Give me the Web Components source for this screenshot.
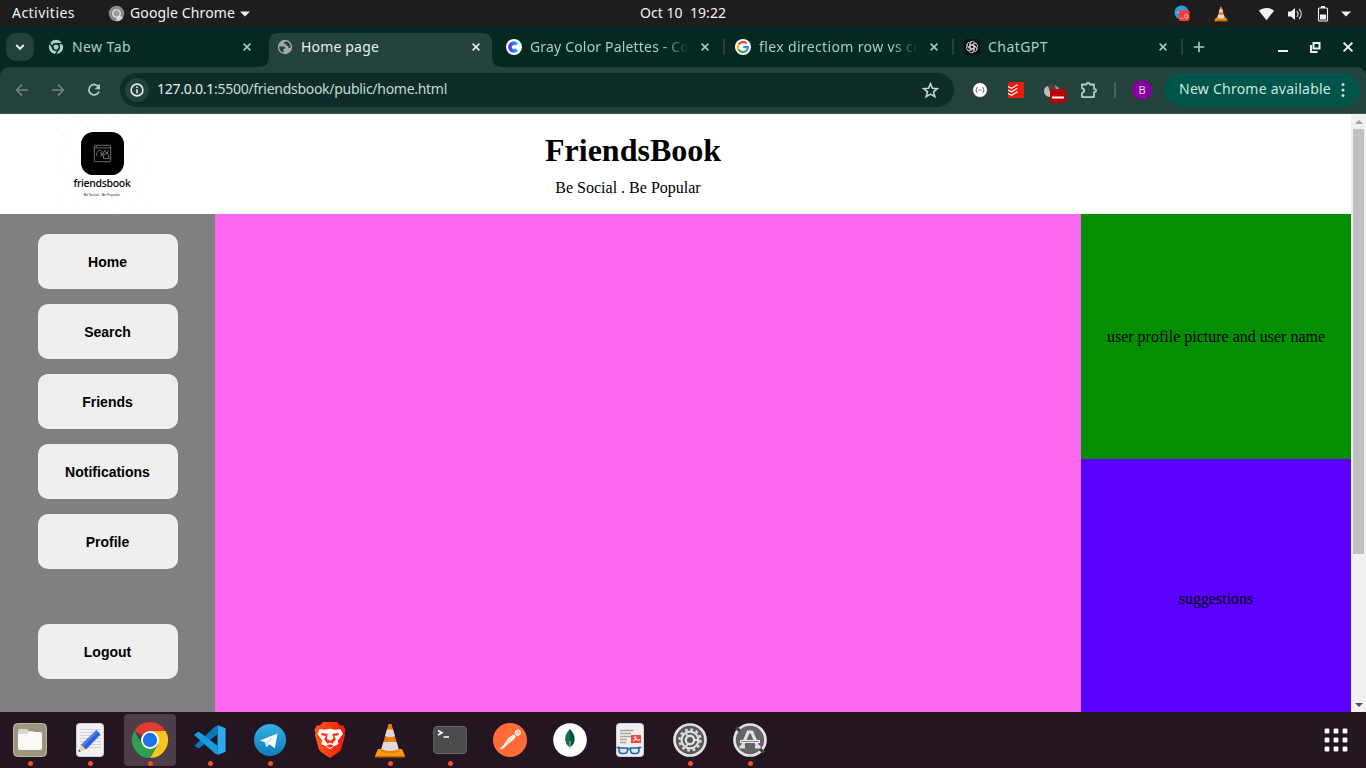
<!DOCTYPE html>
<html lang="en">
<head>
<meta charset="utf-8">
<title>Home page</title>
<style>
html,body{margin:0;padding:0;height:100%;overflow:hidden}
body{font-family:"Noto Sans","Open Sans",sans-serif}
</style>
</head>
<body>
<desk-top></desk-top>
<script>
const define=(name,html,setup)=>{
  const t=document.createElement('template');
  t.innerHTML=html;
  customElements.define(name,class extends HTMLElement{
    constructor(){super();this.attachShadow({mode:'open'}).append(t.content.cloneNode(true));}
    connectedCallback(){if(setup)setup(this,this.shadowRoot);}
  });
};

const stroke=(w,c='currentColor')=>`fill="none" stroke="${c}" stroke-width="${w}"`;
const cone=`<path d="M4 26h24l3 7H1z" fill="#f59a12"/><path d="M1 33h30v1.500H1z" fill="#c96500"/><path d="M14.500 1h3L25 28c-3 3-15 3-18 0z" fill="#f27a08"/><path d="M13 6.500h6l2 6.500c-3 1.500-7 1.500-10 0zM9.300 19h13.400l2 7c-4 2.500-13.400 2.500-17.400 0z" fill="#dcdcdc"/>`;
const glyphs={
  chromeSmall:['0 0 18 18',`<circle cx="9" cy="9" r="8.200" fill="#8b8b8b"/><path d="M9 9l7 4.300A8 8 0 0 1 9 17.200z" fill="#d4d4d4"/><circle cx="9" cy="9" r="4" fill="#9a9a9a" stroke="#eee" stroke-width="1.200"/>`],
  caret:['0 0 10 6',`<path d="M0 .5h10L5 5.500z" fill="#f2f2f2"/>`],
  chat:['0 0 18 18',`<circle cx="8" cy="8" r="7.500" fill="#279fda"/><path d="M3 8l4-1.500V9z" fill="#fff"/><rect x="5" y="5.500" width="11.500" height="11.500" rx="2.500" fill="#f63c38"/><path d="M6.500 14h1.300M8.600 14h1.300" stroke="#fcc"/><rect x="11.300" y="10" width="3.300" height="4" rx="1.400" ${stroke(.9,'#fcc')}/>`],
  cone:['0 0 32 35',cone],
  wifi:['0 0 18 14',`<path d="M1 3.500C5.500-.3 12.500-.3 17 3.500L9 13.500z" fill="#f2f2f2"/>`],
  sound:['0 0 16 14',`<path d="M1 4.500h3L8 1v12L4 9.500H1z" fill="#f2f2f2"/><path d="M9.800 4.200c1.500 1.600 1.500 4 0 5.600M12 2c3 2.800 3 7.200 0 10" ${stroke(1.1,'#ddd')}/>`],
  battery:['0 0 12 16',`<path d="M4 0h4v2H4zM3 8.500h6v5H3z" fill="#f2f2f2"/><rect x="1.500" y="2" width="9" height="13" rx="1" ${stroke(1.1,'#f2f2f2')}/>`],
  down:['0 0 12 12',`<path d="M2.800 4.300L6 7.500 9.200 4.300" ${stroke(1.7)}/>`],
  chrome1:['0 0 16 16',`<circle cx="8" cy="8" r="7.200" fill="#a8cfc4"/><circle cx="8" cy="8" r="3.300" fill="#a8cfc4" stroke="#062822" stroke-width="1.500"/><path d="M8 4.600h7M5.100 9.700L1.600 3.900M11 9.700l-3.600 6" ${stroke(1.4,'#062822')}/>`],
  globe:['0 0 16 16',`<circle cx="8" cy="8" r="7.200" fill="#a3a8ac"/><path d="M2.300 7.500h4c1.600 0 2.400 1 2 2.300H6.500v3.600C3.900 13 2 10.600 2.300 7.500zM9.300 2.400c-1.500.3-2.600 1-2.400 2.500h2.500v2h2v2h2.200c.6-3-1.500-6-4.300-6.500z" fill="#24423c"/>`],
  canva:['0 0 16 16',`<defs><linearGradient id="g"><stop stop-color="#7227f2"/><stop offset="1" stop-color="#00c4e8"/></linearGradient></defs><circle cx="8" cy="8" r="8" fill="#fff"/><path d="M10.800 5.400A3.900 3.900 0 1 0 10.800 10.600" ${stroke(3.7,'url(#g)')}/>`],
  google:['0 0 16 16',`<circle cx="8" cy="8" r="8" fill="#fff"/><g fill="none" stroke-width="2.200"><path d="M11.700 4.600A5 5 0 0 0 3.600 5.600" stroke="#ea4335"/><path d="M3.600 5.600a5 5 0 0 0 0 4.800" stroke="#fbbc05"/><path d="M3.600 10.400a5 5 0 0 0 7.800 1.300" stroke="#34a853"/><path d="M11.400 11.700A4.500 4.500 0 0 0 13 8.100H8.200" stroke="#4285f4"/></g>`],
  gpt:['0 0 16 16',`<rect width="16" height="16" rx="3" fill="#111"/><g ${stroke(.8,'#ddd')}>${[0,60,120,180,240,300].map(a=>`<path transform="rotate(${a} 8 8)" d="M6.400 8.900V4.700a2.400 2.400 0 0 1 4.400-1.300M6.400 6.200L9.800 4.300a2.300 2.300 0 0 1 3 .9"/>`).join('')}</g>`],
  x:['0 0 10 10',`<path d="M1.600 1.600l6.800 6.800M8.400 1.600L1.600 8.400" ${stroke(1.5)}/>`],
  bigx:['0 0 12 12',`<path d="M1.600 1.600l8.800 8.800M10.400 1.600L1.600 10.400" ${stroke(2)}/>`],
  plus:['0 0 12 12',`<path d="M6 .8v10.400M.8 6h10.400" ${stroke(1.6)}/>`],
  min:['0 0 12 12',`<path d="M1 10h10" ${stroke(2)}/>`],
  restore:['0 0 12 12',`<path d="M4.500 2h6v5.500h-6z" ${stroke(2)}/><path d="M2 4v7h6.500" ${stroke(2)}/>`],
  back:['0 0 14 14',`<path d="M13 7H2M7 1.500L1.500 7 7 12.500" ${stroke(1.6)}/>`],
  fwd:['0 0 14 14',`<path d="M1 7h11M7 1.500L12.500 7 7 12.500" ${stroke(1.6)}/>`],
  reload:['0 0 14 14',`<path d="M11.700 4.300A5.200 5.200 0 1 0 12 8.500" ${stroke(1.8)}/><path d="M13 .8v5.400H7.600z" fill="currentColor"/>`],
  info:['0 0 14 14',`<circle cx="7" cy="7" r="5.900" ${stroke(1.6)}/><path d="M7 6.200v4M7 3.500v1.600" ${stroke(1.6)}/>`],
  star:['0 0 16 16',`<path d="M8 1.700l1.800 4.200 4.600.4-3.500 3 1.100 4.500L8 11.400l-4 2.400 1.100-4.500-3.500-3 4.600-.4z" ${stroke(1.500)}/>`],
  braces:['0 0 16 16',`<circle cx="8" cy="8" r="7.400" fill="#fff" stroke="#222" stroke-width=".7"/><path d="M5.500 5.200C4 5.200 5.200 7.600 3.800 8c1.400.4.200 2.800 1.700 2.800M10.500 5.200c1.500 0 .3 2.400 1.700 2.800-1.400.4-.2 2.800-1.700 2.800" ${stroke(.9,'#333')}/><path d="M6.500 8h3" ${stroke(1,'#333')} stroke-dasharray="1 1"/>`],
  todo:['0 0 16 16',`<rect width="16" height="16" rx="1.500" fill="#ea1c0d"/><path d="M0 4.500l3.500 1.700L9.500 2.800M0 8l3.500 1.700 6-3.400M0 11.500l3.500 1.700 6-3.400" ${stroke(1.2,'#fff')}/>`],
  mask:['0 0 24 22',`<path d="M1 9c0-4 4-6 6-4s2 9 1 10C4 15 1 13 1 9z" fill="#bdbdbd"/><path d="M5 4l3-2 5 1 4 4v3H7z" fill="#444"/><path d="M12 3l4 3v3l-3-1z" fill="#999"/><rect x="7" y="7" width="16" height="14" rx="2.500" fill="#b80000"/><path d="M9 15.500h12" ${stroke(2,'#fff')}/>`],
  puzzle:['0 0 18 18',`<path d="M2 3.500h4.500c0-2.500 3.200-2.500 3.200 0H14v4.400c2.800 0 2.800 3.200 0 3.200v5H2v-4.300c3-.3 3-4.300 0-4.500z" ${stroke(1.8)} stroke-linejoin="round"/>`],
  dots:['0 0 4 16',`<circle cx="2" cy="2.500" r="1.500" fill="currentColor"/><circle cx="2" cy="8" r="1.500" fill="currentColor"/><circle cx="2" cy="13.500" r="1.500" fill="currentColor"/>`],
  up:['0 0 8 4',`<path d="M0 4h8L4 0z" fill="#a3a3a3"/>`],
  dn:['0 0 8 4',`<path d="M0 0h8L4 4z" fill="#505050"/>`],
  files:['0 0 36 36',`<rect x="1.500" y="1.500" width="33" height="33" rx="4" fill="#9c957f" stroke="#b9b3a1"/><path d="M6 9a2 2 0 0 1 2-2h7l2 2h5v8H6z" fill="#dcd8c9"/><path d="M6 12h9l2-2h11a2 2 0 0 1 2 2v14a2 2 0 0 1-2 2H8a2 2 0 0 1-2-2z" fill="#faf9f7"/>`],
  edit:['0 0 36 36',`<rect x="4.500" y="1.500" width="27" height="33" rx="3" fill="#f1f1f2" stroke="#d0d0d0"/><path d="M8 7.500h21M8 10.500h21M8 13.500h21M8 16.500h21M8 19.500h21M8 22.500h21M8 25.500h21" ${stroke(.9,'#cdcdcf')}/><path d="M24.500 8l4 4.500-14.500 15-5-4.500z" fill="#2f5fd6"/><path d="M24.500 8l-15.500 15 2 2L26 9.800z" fill="#4d82ec"/><path d="M9 23l5 4.500-7.500 2z" fill="#f1d0ab"/><path d="M6.300 29.800l.8-2.200 1.700 1.600z" fill="#333"/>`],
  chrome:['0 0 36 36',`<path d="M18 18L2.400 9A18 18 0 0 1 33.600 9z" fill="#df3b2f"/><path d="M18 18V9h15.600A18 18 0 0 1 18 36l7.800-13.500z" fill="#fcc31e"/><path d="M18 18l7.800 4.500L18 36A18 18 0 0 1 2.400 9l7.800 13.500z" fill="#30a050"/><circle cx="18" cy="18" r="9" fill="#fff"/><circle cx="18" cy="18" r="7.200" fill="#1c73e8"/>`],
  code:['0 0 36 36',`<path d="M1.500 24L23 4l3-1.500V12L6 27z" fill="#0877b9"/><path d="M1.500 12L6 9l20 15v9.500L23 32 1.500 13z" fill="#169cdf"/><path d="M26 2l8.500 3.500v25L26 34z" fill="#2caaf1"/>`],
  tele:['0 0 36 36',`<defs><linearGradient id="g" x2="0" y2="1"><stop stop-color="#37aee2"/><stop offset="1" stop-color="#0b7fbd"/></linearGradient></defs><circle cx="18" cy="18" r="16" fill="url(#g)"/><path d="M8 18.500L25.500 11.500l-2.700 14.700-5.500-4-3 3-1.300-5z" fill="#fff"/><path d="M13.500 20l9-5.500-6.200 7-2 3.500z" fill="#cfe5f2"/>`],
  brave:['0 0 36 36',`<defs><linearGradient id="g"><stop stop-color="#ff5a1c"/><stop offset=".5" stop-color="#fb3a16"/><stop offset="1" stop-color="#f5140c"/></linearGradient></defs><path d="M11 0h14l3.200 3.600 2.800-.3 2.500 4.500-1 3 .6 2-3.800 14.200L27 30l-9 6-9-6-2.300-3L2.900 12.800l.6-2-1-3L5 3.300l2.800.3z" fill="url(#g)"/><path d="M7.500 7.300l5.500.5 5-1 5 1 5.500-.5 2.500 4.700-5.300 6.500.8 3.500-5 2.500-3.500 2.700-3.500-2.700-5-2.500.8-3.500L5.500 12z" fill="#fff"/><path d="M9 11l6.800.7-1 4.800 3.200 2.500 3.200-2.500-1-4.800 6.800-.7-.4 2.300-4.300.7 1.500 3.500-3.300 4.200-2.500-1-2.500 1-3.300-4.200 1.500-3.500-4.300-.7zM14.200 23.600l3.800-1.400 3.800 1.400-3.800 2.300z" fill="#fa3516"/>`],
  vlc:['-2 0 36 35',cone],
  term:['0 0 36 36',`<rect x="1.700" y="4.500" width="32.600" height="27" rx="3" fill="#4b4b4b" stroke="#686868"/><path d="M6 8.500l4 2.200L6 13M11.500 15h5.500" ${stroke(1.6,'#fff')}/>`],
  postman:['0 0 36 36',`<circle cx="18" cy="18" r="17" fill="#ff6c37"/><circle cx="25.800" cy="10.700" r="2.700" fill="#ffc4ad" stroke="#fff"/><path d="M7.500 27.800l6-7.300 2-3.500 6-4.800 2.500 2.300-3.300 4-4.700 3.500-4.500 4.300z" fill="#fff"/><path d="M15 19.500l6.500-5.500M15.500 21.500l5.500-4.500" ${stroke(.7,'#ff9d7b')}/>`],
  mongo:['0 0 36 36',`<circle cx="18" cy="18" r="16.800" fill="#fff"/><path d="M18 7c5.500 5.500 7 14-.2 18.500z" fill="#00543a"/><path d="M18 7c-5.800 5.500-7 14 0 18.500z" fill="#0c7046"/><path d="M18 19v8.500" ${stroke(1,'#b8c4c2')}/>`],
  reader:['0 0 36 36',`<rect x="4.500" y="1.500" width="27" height="33" rx="3" fill="#efefef" stroke="#d2d2d2"/><path d="M8 8.500h13.500M8 11.500h11M8 14.500h13M8 17.500h7M8 20.500h6" ${stroke(1.3,'#aaa696')}/><rect x="19" y="13" width="10" height="8" fill="#ee4b47"/><path d="M21 19.200c3-1 4-4.500 2-4.500s0 4 5 3.300" ${stroke(1,'#fff')}/><path d="M7 26h8.500v2.500a3 3 0 0 1-3 3H10a3 3 0 0 1-3-3zM18.500 26H27v2.500a3 3 0 0 1-3 3h-2.500a3 3 0 0 1-3-3z" fill="#dce5ef" stroke="#2264a7" stroke-width="1.500"/><path d="M15.500 27h3M4.500 25.500H8M26 25.500h3.500" ${stroke(1.6,'#2264a7')}/>`],
  gear:['0 0 36 36',`<circle cx="18" cy="18" r="15.500" fill="#595959" stroke="#e2e2e2" stroke-width="2.700"/><circle cx="18" cy="18" r="10.500" ${stroke(2.400,'#dedede')} stroke-dasharray="2.750 2.750"/><circle cx="18" cy="18" r="8.400" ${stroke(2.200,'#dedede')}/><circle cx="18" cy="18" r="4.200" ${stroke(2.400,'#dedede')}/><path d="M22 18h4M16 14.600l-2.200-3.600M16 21.400l-2.200 3.600" ${stroke(1.800,'#dedede')}/>`],
  updater:['0 0 36 36',`<circle cx="18" cy="18" r="15.500" fill="#656565" stroke="#e2e2e2" stroke-width="2.700"/><path d="M4 5.500l4 3.500M28 27l4 3.500" ${stroke(3,'#454545')}/><path d="M10 25l6.200-15h3.600L26 25M7.500 25h5.500M23 25h5.500" ${stroke(3.200,'#e2e2e2')}/><path d="M8 19.500h20" ${stroke(3,'#eee')}/><path d="M9 19.500h18" ${stroke(1,'#ad68b8')}/>`],
  grid:['0 0 24 24',[0,9,18].map(y=>[0,9,18].map(x=>`<rect x="${x+.6}" y="${y+.6}" width="4.800" height="4.800" rx="1.200" fill="#fff"/>`).join('')).join('')],
};

define('app-icon',`<style>:host{display:block;flex:none}svg{display:block;width:100%;height:100%;overflow:visible}</style>`,(el,r)=>{
  const [vb,body]=glyphs[el.getAttribute('name')];
  const [w,h]=(el.getAttribute('size')||'16').split(' ');
  el.style.width=w+'px';el.style.height=(h||w)+'px';
  const holder=document.createElement('template');
  holder.innerHTML=`<svg viewBox="${vb}">${body}</svg>`;
  r.append(holder.content);
});

// Spreads its label over the given width by adjusting the letter spacing.
define('fit-text',`<style>:host{display:block;flex:none;white-space:pre}span{display:inline-block}</style><span><slot></slot></span>`,(el,r)=>{
  const span=r.querySelector('span'),w=+el.getAttribute('w');
  el.style.width=w+'px';
  const n=el.textContent.length;
  span.style.letterSpacing=((w-span.getBoundingClientRect().width)/n)+'px';
});

define('system-bar',`<style>
:host{display:grid;grid-template-columns:1fr 86px 1fr;align-items:center;height:27px;background:#1d1d1d;color:#f2f2f2;font-size:14px;line-height:27px}
div{display:flex;align-items:center}
fit-text{height:27px;line-height:25px}
.l{padding-left:12px}.l app-icon:first-of-type{margin:0 5px 0 33px}.l app-icon:last-of-type{margin-left:5px}
.r{justify-content:flex-end;padding-right:15px}
</style>
<div class="l"><fit-text w="63">Activities</fit-text><app-icon name="chromeSmall" size="17"></app-icon><fit-text w="105">Google Chrome</fit-text><app-icon name="caret" size="10 6"></app-icon></div>
<fit-text w="86">Oct 10  19:22</fit-text>
<div class="r"><app-icon name="chat" size="17"></app-icon><app-icon name="cone" size="14 16" style="margin-left:23px"></app-icon><app-icon name="wifi" size="17 14" style="margin-left:30px"></app-icon><app-icon name="sound" size="16 14" style="margin-left:12px"></app-icon><app-icon name="battery" size="12 16" style="margin-left:14px"></app-icon><app-icon name="caret" size="10 6" style="margin-left:12px"></app-icon></div>`);

define('browser-tab',`<style>
:host{display:flex;align-items:center;width:229px;height:40px;box-sizing:border-box;padding:0 0 0 8px;color:#a8cfc4;font-size:14px;line-height:38px;position:relative;flex:none}
:host>*,::slotted(*){position:relative}
.t{width:159px;margin:0 11px 0 8px;overflow:hidden;flex:none}
:host([fade]) .t{-webkit-mask-image:linear-gradient(90deg,#000 132px,transparent 159px)}
:host([active]){color:#e3f1ed}
.bg{display:none}
:host([active])>.bg{display:block;position:absolute;left:-10px;top:6px;width:243px;height:34px;fill:#24423c}
:host([sep]):after{content:"";position:absolute;right:2px;top:12px;width:2px;height:16px;background:#24423c}
</style><svg class="bg" viewBox="0 0 243 34"><path d="M0 34c7 0 10-4 10-10V10C10 3 14 0 20 0h203c7 0 10 4 10 10v14c0 6 3 10 10 10z"/></svg><slot name="icon"></slot><div class="t"><slot></slot></div><app-icon name="x" size="10"></app-icon>`);

define('tab-strip',`<style>
:host{display:flex;height:40px;background:#062822;align-items:center;padding-left:6px}
.menu{width:28px;height:28px;border-radius:10px;background:#24423c;color:#e3f1ed;display:flex;align-items:center;justify-content:center;margin-right:6px}
.ctl{display:flex;align-items:center;color:#eef3f2}
</style>
<div class="menu"><app-icon name="down" size="14"></app-icon></div>
<browser-tab><app-icon slot="icon" name="chrome1"></app-icon><fit-text w="59">New Tab</fit-text></browser-tab>
<browser-tab active><app-icon slot="icon" name="globe"></app-icon><fit-text w="78">Home page</fit-text></browser-tab>
<browser-tab sep fade><app-icon slot="icon" name="canva"></app-icon><fit-text w="159">Gray Color Palettes - Co</fit-text></browser-tab>
<browser-tab sep fade><app-icon slot="icon" name="google"></app-icon><fit-text w="163">flex directiom row vs co</fit-text></browser-tab>
<browser-tab sep><app-icon slot="icon" name="gpt"></app-icon><fit-text w="60">ChatGPT</fit-text></browser-tab>
<div class="ctl"><app-icon name="plus" size="12" style="margin-left:8px;color:#a8cfc4"></app-icon><app-icon name="min" size="12" style="margin-left:72px"></app-icon><app-icon name="restore" size="12" style="margin-left:20px"></app-icon><app-icon name="bigx" size="12" style="margin-left:21px"></app-icon></div>`);

define('tool-bar',`<style>
:host{display:block;height:47px;background:#062822;color:#c3d9d3;font-size:14px}
.bar{display:flex;align-items:center;height:47px;box-sizing:border-box;background:#24423c;border-bottom:1px solid #3c5751;border-radius:9px 9px 0 0;padding:0 6px 0 15px}
.url{display:flex;align-items:center;width:834px;height:34px;border-radius:17px;background:#0e2d28;box-sizing:border-box;padding:0 15px 0 5px;margin-left:19px;flex:none}
fit-text{height:22px;line-height:20px}
.info{width:24px;height:24px;border-radius:12px;background:#24423c;color:#e3f1ed;display:flex;align-items:center;justify-content:center;margin-right:8px}
.host{color:#e3f1ed}
.av{width:20px;height:20px;border-radius:50%;background:#8600a0;color:#f0d5f5;font:11px/20px "Noto Sans",sans-serif;text-align:center;margin:0 12px 0 16px;flex:none}
.new{display:flex;align-items:center;width:196px;height:34px;border-radius:17px;background:#00544a;color:#c9e8df;box-sizing:border-box;padding:0 15px;justify-content:space-between;flex:none}
.sp{width:2px;height:16px;background:#42645c;margin-left:16px;flex:none}
</style><div class="bar">
<app-icon name="back" size="14" style="color:#6d877f"></app-icon><app-icon name="fwd" size="14" style="color:#6d877f;margin-left:22px"></app-icon><app-icon name="reload" size="14" style="color:#a8cfc4;margin-left:22px"></app-icon>
<div class="url"><div class="info"><app-icon name="info" size="14"></app-icon></div><fit-text class="host" w="57">127.0.0.1</fit-text><fit-text w="233">:5500/friendsbook/public/home.html</fit-text><app-icon name="star" size="17" style="margin-left:auto"></app-icon></div>
<app-icon name="braces" size="16" style="margin-left:18px"></app-icon><app-icon name="todo" size="16" style="margin-left:20px"></app-icon><app-icon name="mask" size="24 22" style="margin:6px 0 0 19px"></app-icon><app-icon name="puzzle" size="18" style="margin-left:13px;color:#a8cfc4"></app-icon><i class="sp"></i><div class="av">B</div>
<div class="new"><fit-text w="152">New Chrome available</fit-text><app-icon name="dots" size="4 16"></app-icon></div></div>`);

define('brand-logo',`<style>
:host{display:flex;flex-direction:column;align-items:center;width:100px;height:100px;box-sizing:border-box;padding:18px 0 0 2px;background:repeating-linear-gradient(145deg,#fff 0 7px,#fafafa 7px 8px);color:#000;font-family:"Noto Sans",sans-serif}
svg{width:43px;height:43px;flex:none}
.n{font-size:10.500px;line-height:14px;margin-top:1px;font-weight:500}
small{font-size:3.600px;line-height:5px;margin-top:2px;color:#222}
</style><svg viewBox="0 0 42 42"><rect width="42" height="42" rx="12"/><g fill="none" stroke="#999" stroke-width=".7"><rect x="13" y="13" width="16" height="16" rx="1"/><path d="M13 15.500h16M14.500 14.200h1M16 24c-2-3 0-6 3-6 2 1 2 4 0 6M19 20l2 3 2-5 2 3 2-3M22 23l4-3 1.500 6H22z"/></g></svg><div class="n"><fit-text w="57">friendsbook</fit-text></div><small>Be Social . Be Popular</small>`);

define('page-header',`<style>
:host{display:grid;grid-template-columns:51px 100px 964px 1fr;height:100px;background:#fff;color:#000;font-family:"Liberation Serif",serif}
brand-logo{grid-column:2}
.c{text-align:center;padding-top:18px}
h1{font-size:32px;line-height:37px;margin:0}
p{font-size:16px;line-height:18px;margin:10px 10px 0 0}
</style><brand-logo></brand-logo><div class="c"><h1>FriendsBook</h1><p>Be Social . Be Popular</p></div>`);

define('nav-button',`<style>
:host{display:block}
button{display:block;width:140px;height:55px;border:0;padding:0 1px 0 0;border-radius:10px;background:#efefef;color:#000;font:bold 14px "Liberation Sans",Arial,sans-serif}
</style><button><slot></slot></button>`);

define('side-nav',`<style>:host{display:flex;flex-direction:column;align-items:center;gap:15px;background:#808080;padding:20px 0 0 1px;box-sizing:border-box}.out{margin-top:40px}</style>
<nav-button>Home</nav-button><nav-button>Search</nav-button><nav-button>Friends</nav-button><nav-button>Notifications</nav-button><nav-button>Profile</nav-button><nav-button class="out">Logout</nav-button>`);

define('scroll-bar',`<style>:host{display:flex;flex-direction:column;align-items:center;width:15px;background:#f1f1f1}
.a{height:15px;display:flex;align-items:center;justify-content:center}.t{width:11px;height:425px;background:#c1c1c1}.e{margin-top:auto}</style>
<div class="a"><app-icon name="up" size="8 4"></app-icon></div><div class="t"></div><div class="a e"><app-icon name="dn" size="8 4"></app-icon></div>`);

define('web-page',`<style>
:host{display:grid;grid-template-columns:1351px 15px;height:598px;overflow:hidden}
.m{display:grid;grid-template-columns:215px 866px 270px;height:498px}
.feed{background:#fc68f0}
.r{display:grid;grid-template-rows:245px 280px;height:498px;overflow:hidden;font:16px "Liberation Serif",serif;color:#000}
.r div{display:flex;align-items:center;justify-content:center}
.p{background:#029002}.s{background:#5a00ff}
</style><div><page-header></page-header><div class="m"><side-nav></side-nav><div class="feed"></div><div class="r"><div class="p">user profile picture and user name</div><div class="s">suggestions</div></div></div></div><scroll-bar></scroll-bar>`);

define('dock-item',`<style>
:host{display:flex;flex:none;position:relative;width:52px;height:52px;border-radius:4px;align-items:center;justify-content:center}
:host([active]){background:#4b3e48}
i{display:none;position:absolute;left:23.500px;bottom:0;width:5px;height:5px;border-radius:50%;background:#e95420}
:host([running]) i{display:block}
</style><slot></slot><i></i>`);

define('app-dock',`<style>:host{display:flex;align-items:center;gap:8px;height:56px;background:#231620;padding:0 18px 0 4px}.g{margin-left:auto}</style>
<dock-item running><app-icon name="files" size="36"></app-icon></dock-item>
<dock-item running><app-icon name="edit" size="36"></app-icon></dock-item>
<dock-item running active><app-icon name="chrome" size="36"></app-icon></dock-item>
<dock-item running><app-icon name="code" size="34"></app-icon></dock-item>
<dock-item running><app-icon name="tele" size="36"></app-icon></dock-item>
<dock-item><app-icon name="brave" size="36"></app-icon></dock-item>
<dock-item running><app-icon name="vlc" size="36 35"></app-icon></dock-item>
<dock-item running><app-icon name="term" size="36"></app-icon></dock-item>
<dock-item><app-icon name="postman" size="36"></app-icon></dock-item>
<dock-item><app-icon name="mongo" size="36"></app-icon></dock-item>
<dock-item><app-icon name="reader" size="36"></app-icon></dock-item>
<dock-item running><app-icon name="gear" size="36"></app-icon></dock-item>
<dock-item running><app-icon name="updater" size="36"></app-icon></dock-item>
<app-icon class="g" name="grid" size="24"></app-icon>`);

define('desk-top',`<style>:host{display:flex;flex-direction:column;width:1366px;height:768px;overflow:hidden}:host>*{flex:none}</style>
<system-bar></system-bar><tab-strip></tab-strip><tool-bar></tool-bar><web-page></web-page><app-dock></app-dock>`);
</script>
</body>
</html>
